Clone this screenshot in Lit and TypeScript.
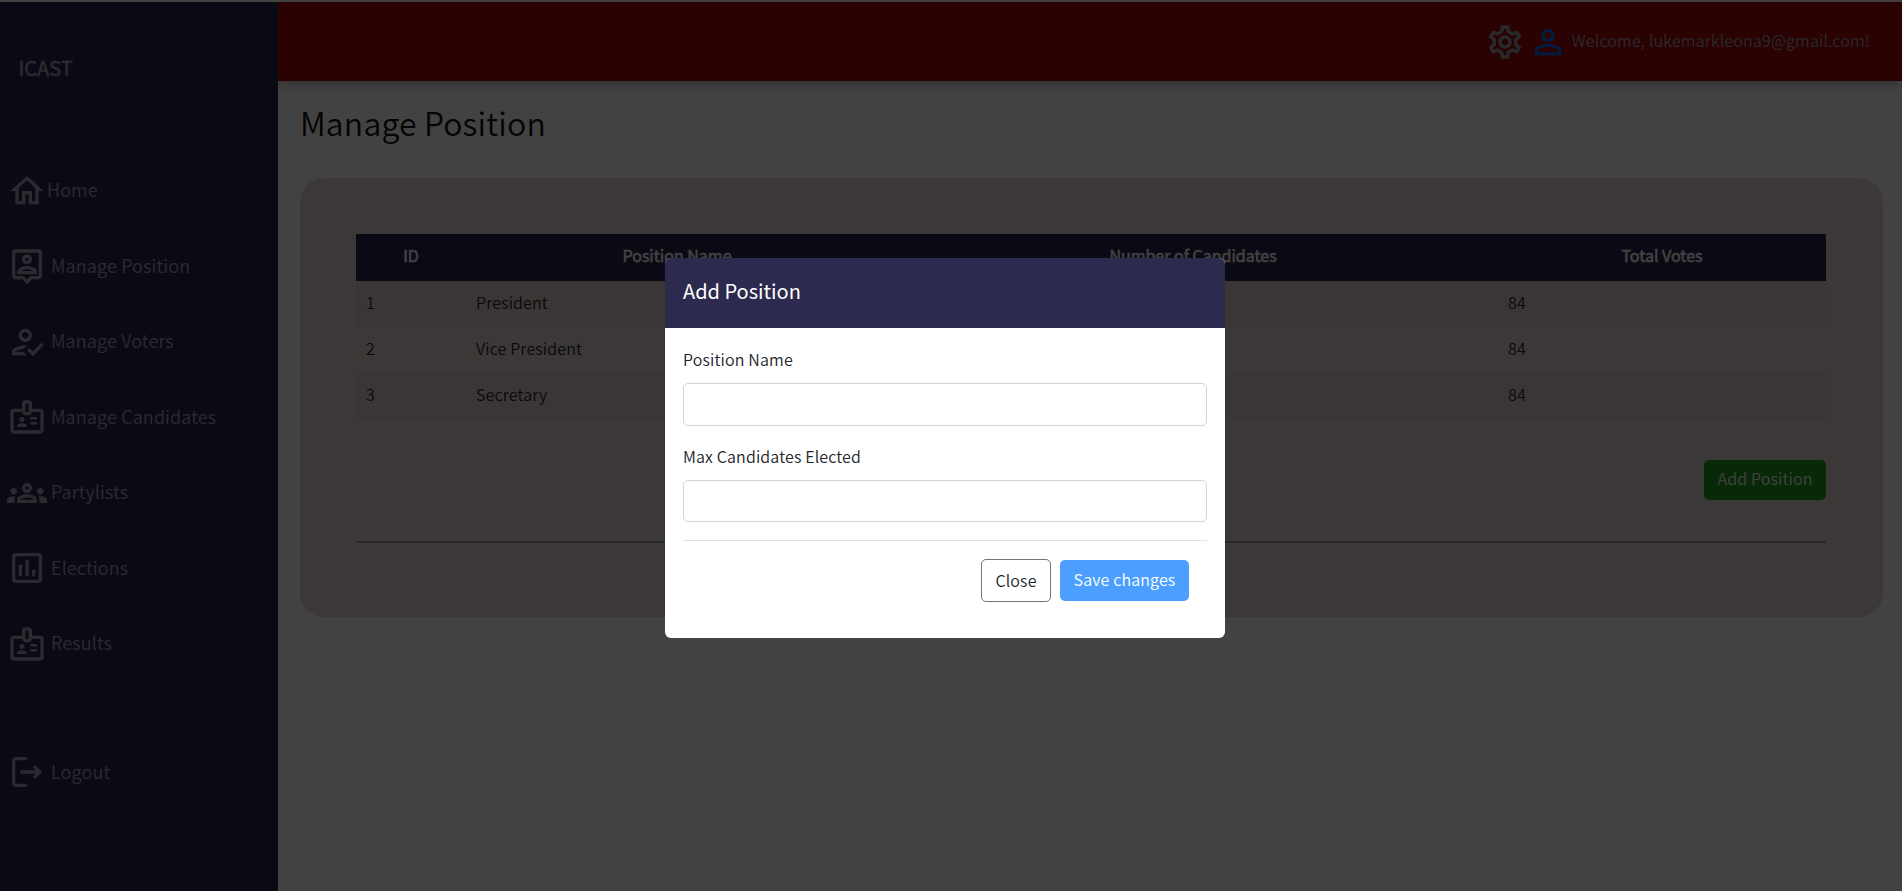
import { LitElement, css, html, svg } from "lit";
import { customElement } from "lit/decorators.js";

const ICONS = {
  home: svg`<path d="M12 5.69l5 4.5V18h-2v-6H9v6H7v-7.81l5-4.5M12 3L2 12h3v8h6v-6h2v6h6v-8h3L12 3z"/>`,
  position: svg`<path d="M19 2H5c-1.11 0-2 .9-2 2v14c0 1.1.89 2 2 2h4l3 3 3-3h4c1.1 0 2-.9 2-2V4c0-1.1-.9-2-2-2zm0 16h-4.83l-.59.59L12 20.17l-1.59-1.59-.58-.58H5V4h14v14zm-7-7c1.65 0 3-1.35 3-3s-1.35-3-3-3-3 1.35-3 3 1.35 3 3 3zm0-4c.55 0 1 .45 1 1s-.45 1-1 1-1-.45-1-1 .45-1 1-1zm6 8.58c0-2.5-3.97-3.58-6-3.58s-6 1.08-6 3.58V17h12v-1.42zM8.48 15c.74-.51 2.23-1 3.52-1s2.78.49 3.52 1H8.48z"/>`,
  voters: svg`<path d="M11 12c2.21 0 4-1.79 4-4s-1.79-4-4-4-4 1.79-4 4 1.79 4 4 4zm0-6c1.1 0 2 .9 2 2s-.9 2-2 2-2-.9-2-2 .9-2 2-2zM5 18c.2-.63 2.57-1.68 4.96-1.94l2.04-2c-.39-.04-.68-.06-1-.06-2.67 0-8 1.34-8 4v2h9l-2-2H5zm15.6-5.5l-5.13 5.17-2.07-2.08L12 17l3.47 3.5L22 13.91z"/>`,
  badge: svg`<path d="M20,7h-5V4c0-1.1-0.9-2-2-2h-2C9.9,2,9,2.9,9,4v3H4C2.9,7,2,7.9,2,9v11c0,1.1,0.9,2,2,2h16c1.1,0,2-0.9,2-2V9C22,7.9,21.1,7,20,7z M11,4h2v5h-2V4z M20,20H4V9h5c0,1.1,0.9,2,2,2h2c1.1,0,2-0.9,2-2h5V20z M9,15c0.83,0,1.5-0.67,1.5-1.5S9.83,12,9,12s-1.5,0.67-1.5,1.5S8.17,15,9,15z M11.08,16.18C10.44,15.9,9.74,15.75,9,15.75s-1.44,0.15-2.08,0.43C6.36,16.42,6,16.96,6,17.57V18h6v-0.43C12,16.96,11.64,16.42,11.08,16.18z M18,13.5h-4V12h4V13.5z M18,16.5h-4V15h4V16.5z"/>`,
  groups: svg`<path d="M4,13c1.1,0,2-0.9,2-2c0-1.1-0.9-2-2-2s-2,0.9-2,2C2,12.1,2.9,13,4,13z M5.13,14.1C4.76,14.04,4.39,14,4,14c-0.99,0-1.93,0.21-2.78,0.58C0.48,14.9,0,15.62,0,16.43V18l4.5,0v-1.61C4.5,15.56,4.73,14.78,5.13,14.1z M20,13c1.1,0,2-0.9,2-2c0-1.1-0.9-2-2-2s-2,0.9-2,2C18,12.1,18.9,13,20,13z M24,16.43c0-0.81-0.48-1.53-1.22-1.85C21.93,14.21,20.99,14,20,14c-0.39,0-0.76,0.04-1.13,0.1c0.4,0.68,0.63,1.46,0.63,2.29V18l4.5,0V16.43z M16.24,13.65c-1.17-0.52-2.61-0.9-4.24-0.9c-1.63,0-3.07,0.39-4.24,0.9C6.68,14.13,6,15.21,6,16.39V18h12v-1.61C18,15.21,17.32,14.13,16.24,13.65z M8.07,16c0.09-0.23,0.13-0.39,0.91-0.69c0.97-0.38,1.99-0.56,3.02-0.56s2.05,0.18,3.02,0.56c0.77,0.3,0.81,0.46,0.91,0.69H8.07z M12,8c0.55,0,1,0.45,1,1s-0.45,1-1,1s-1-0.45-1-1S11.45,8,12,8 M12,6c-1.66,0-3,1.34-3,3c0,1.66,1.34,3,3,3s3-1.34,3-3C15,7.34,13.66,6,12,6L12,6z"/>`,
  poll: svg`<path d="M9 17H7v-7h2v7zm4 0h-2V7h2v10zm4 0h-2v-4h2v4zm2 2H5V5h14v14zm0-16H5c-1.1 0-2 .9-2 2v14c0 1.1.9 2 2 2h14c1.1 0 2-.9 2-2V5c0-1.1-.9-2-2-2z"/>`,
  logout: svg`<path d="M17 8l-1.4 1.4L17.2 11H8v2h9.2l-1.6 1.6L17 16l4-4zM5 5h7V3H5c-1.1 0-2 .9-2 2v14c0 1.1.9 2 2 2h7v-2H5z"/>`,
  settings: svg`<path d="M19.43 12.98c.04-.32.07-.64.07-.98 0-.34-.03-.66-.07-.98l2.11-1.65c.19-.15.24-.42.12-.64l-2-3.46c-.09-.16-.26-.25-.44-.25-.06 0-.12.01-.17.03l-2.49 1c-.52-.4-1.08-.73-1.69-.98l-.38-2.65C14.46 2.18 14.25 2 14 2h-4c-.25 0-.46.18-.49.42l-.38 2.65c-.61.25-1.17.59-1.69.98l-2.49-1c-.06-.02-.12-.03-.18-.03-.17 0-.34.09-.43.25l-2 3.46c-.13.22-.07.49.12.64l2.11 1.65c-.04.32-.07.65-.07.98 0 .33.03.66.07.98l-2.11 1.65c-.19.15-.24.42-.12.64l2 3.46c.09.16.26.25.44.25.06 0 .12-.01.17-.03l2.49-1c.52.4 1.08.73 1.69.98l.38 2.65c.03.24.24.42.49.42h4c.25 0 .46-.18.49-.42l.38-2.65c.61-.25 1.17-.59 1.69-.98l2.49 1c.06.02.12.03.18.03.17 0 .34-.09.43-.25l2-3.46c.12-.22.07-.49-.12-.64l-2.11-1.65zm-1.98-1.71c.04.31.05.52.05.73 0 .21-.02.43-.05.73l-.14 1.13.89.7 1.08.84-.7 1.21-1.27-.51-1.04-.42-.9.68c-.43.32-.84.56-1.25.73l-1.06.43-.16 1.13-.2 1.35h-1.4l-.19-1.35-.16-1.13-1.06-.43c-.43-.18-.83-.41-1.23-.71l-.91-.7-1.06.43-1.27.51-.7-1.21 1.08-.84.89-.7-.14-1.13c-.03-.31-.05-.54-.05-.74s.02-.43.05-.73l.14-1.13-.89-.7-1.08-.84.7-1.21 1.27.51 1.04.42.9-.68c.43-.32.84-.56 1.25-.73l1.06-.43.16-1.13.2-1.35h1.39l.19 1.35.16 1.13 1.06.43c.43.18.83.41 1.23.71l.91.7 1.06-.43 1.27-.51.7 1.21-1.07.85-.89.7.14 1.13zM12 8c-2.21 0-4 1.79-4 4s1.79 4 4 4 4-1.79 4-4-1.79-4-4-4zm0 6c-1.1 0-2-.9-2-2s.9-2 2-2 2 .9 2 2-.9 2-2 2z"/>`,
  person: svg`<path d="M12 5.9c1.16 0 2.1.94 2.1 2.1s-.94 2.1-2.1 2.1S9.9 9.16 9.9 8s.94-2.1 2.1-2.1m0 9c2.97 0 6.1 1.46 6.1 2.1v1.1H5.9V17c0-.64 3.13-2.1 6.1-2.1M12 4C9.79 4 8 5.79 8 8s1.79 4 4 4 4-1.79 4-4-1.79-4-4-4zm0 9c-2.67 0-8 1.34-8 4v3h16v-3c0-2.66-5.33-4-8-4z"/>`,
};

type IconName = keyof typeof ICONS;

const NAV: { label: string; icon: IconName }[] = [
  { label: "Home", icon: "home" },
  { label: "Manage Position", icon: "position" },
  { label: "Manage Voters", icon: "voters" },
  { label: "Manage Candidates", icon: "badge" },
  { label: "Partylists", icon: "groups" },
  { label: "Elections", icon: "poll" },
  { label: "Results", icon: "badge" },
];

const POSITIONS = [
  { id: 1, name: "President", votes: 84 },
  { id: 2, name: "Vice President", votes: 84 },
  { id: 3, name: "Secretary", votes: 84 },
];

const icon = (name: IconName) =>
  html`<svg class="icon" viewBox="0 0 24 24" fill="currentColor">${ICONS[name]}</svg>`;

@customElement("app-root")
export class AppRoot extends LitElement {
  static styles = css`
    :host {
      display: block;
      height: 891px;
      overflow: hidden;
      position: relative;
      background: #fff;
      font-family: "Noto Sans CJK SC", "Noto Sans", sans-serif;
      font-size: 16px;
      font-weight: 350;
      letter-spacing: 0.009em;
      line-height: 24px;
      color: #212529;
    }

    .page {
      display: flex;
      height: 891px;
      padding-top: 2px;
      box-sizing: border-box;
    }

    .sidebar {
      width: 278px;
      flex: none;
      background: #2c2a4e;
      color: #a0a6b0;
    }

    .brand {
      height: 151px;
      padding: 50px 0 0 18.5px;
      box-sizing: border-box;
      font-size: 20px;
      line-height: 32px;
      font-weight: 400;
      letter-spacing: 0;
      -webkit-text-stroke: 0.5px currentColor;
    }

    .nav-item {
      display: flex;
      align-items: center;
      gap: 4px;
      height: 75.5px;
      padding-left: 7px;
      font-size: 18px;
    }

    .nav-item span {
      margin-top: -3px;
    }

    .nav-item.home {
      gap: 0;
    }

    .nav-item.home span {
      margin-top: -4px;
    }

    .nav-item.logout {
      margin-top: 53px;
    }

    .nav-item.logout span {
      margin-top: -2px;
    }

    .icon {
      width: 40px;
      height: 40px;
      flex: none;
      display: block;
    }

    .content {
      flex: 1;
      min-width: 0;
    }

    .topbar {
      height: 79px;
      background: #a50b0b;
      box-shadow: 0 4px 10px rgba(0, 0, 0, 0.25);
      display: flex;
      align-items: center;
      justify-content: flex-end;
      gap: 3.5px;
      padding-right: 32px;
      color: #9aa0a8;
    }

    .topbar .user {
      color: #0d6efd;
    }

    .topbar .welcome {
      margin-top: -4px;
    }

    .title {
      margin: 19px 0 0 22px;
      font-size: 32px;
      line-height: 44px;
      font-weight: 350;
      color: #111;
    }

    .card {
      margin: 34px 19px 0 22px;
      height: 439px;
      box-sizing: border-box;
      padding: 56px 57px 0 56px;
      background: #e8d8d3;
      border-radius: 24px;
    }

    table {
      width: 100%;
      border-collapse: collapse;
      table-layout: fixed;
    }

    th {
      height: 47px;
      padding: 0 0 6px;
      background: #2c2a4e;
      color: #fff;
      font-weight: 400;
      letter-spacing: 0;
      -webkit-text-stroke: 0.5px currentColor;
      text-align: center;
      box-sizing: border-box;
    }

    td {
      height: 46px;
      padding: 0 10px 4px;
      box-sizing: border-box;
    }

    tbody tr:nth-child(odd) td {
      background: rgba(0, 0, 0, 0.03);
    }

    .actions {
      display: flex;
      justify-content: flex-end;
      margin-top: 41px;
    }

    .add {
      width: 122px;
      height: 40px;
      padding: 0 0 5px;
      border: none;
      border-radius: 5px;
      background: #1f9f1f;
      color: #fff;
      font: inherit;
      letter-spacing: inherit;
    }

    .rule {
      height: 2px;
      margin-top: 41px;
      background: #999;
    }

    .backdrop {
      position: fixed;
      inset: 0;
      box-sizing: border-box;
      padding-right: 12px;
      background: rgba(0, 0, 0, 0.74);
      display: flex;
      justify-content: center;
      align-items: flex-start;
    }

    .modal {
      width: 560px;
      height: 380px;
      margin-top: 258px;
      background: #fff;
      border-radius: 6px;
      overflow: hidden;
    }

    .modal-head {
      height: 70px;
      display: flex;
      align-items: center;
      padding: 0 0 5px 18px;
      box-sizing: border-box;
      background: #2c2a4e;
      color: #fff;
      font-size: 20px;
      font-weight: 400;
      letter-spacing: 0;
    }

    .modal-body {
      padding: 19px 18px 0;
    }

    label {
      display: block;
      margin-bottom: 12px;
    }

    label.second {
      margin-top: -1px;
    }

    input {
      display: block;
      width: 100%;
      height: 43px;
      box-sizing: border-box;
      border: 1px solid #ced4da;
      border-radius: 5px;
      margin-bottom: 19px;
      background: #fff;
    }

    input.second {
      height: 42px;
    }

    .modal-rule {
      height: 1px;
      background: #dee2e6;
      margin-top: -1px;
    }

    .modal-foot {
      display: flex;
      justify-content: flex-end;
      align-items: center;
      gap: 9px;
      margin-top: 18px;
      padding-right: 18px;
    }

    .modal-foot button {
      border-radius: 5px;
      font: inherit;
      letter-spacing: inherit;
    }

    .close {
      width: 70px;
      height: 43px;
      padding: 0 0 2px;
      background: #fff;
      color: #212529;
      border: 1px solid #6c757d;
    }

    .save {
      width: 129px;
      height: 41px;
      padding: 0 0 3px;
      background: #4d9fff;
      color: #fff;
      border: none;
    }
  `;

  render() {
    return html`
      <div class="page">
        <aside class="sidebar">
          <div class="brand">ICAST</div>
          ${NAV.map(
            (item) => html`
              <div class="nav-item ${item.icon === "home" ? "home" : ""}">
                ${icon(item.icon)}<span>${item.label}</span>
              </div>
            `
          )}
          <div class="nav-item logout">${icon("logout")}<span>Logout</span></div>
        </aside>
        <div class="content">
          <header class="topbar">
            ${icon("settings")}
            <span class="user">${icon("person")}</span>
            <span class="welcome">Welcome, lukemarkleona9@gmail.com!</span>
          </header>
          <h1 class="title">Manage Position</h1>
          <section class="card">
            <table>
              <colgroup>
                <col style="width: 110px" />
                <col style="width: 422px" />
                <col style="width: 610px" />
                <col style="width: 328px" />
              </colgroup>
              <thead>
                <tr>
                  <th>ID</th>
                  <th>Position Name</th>
                  <th>Number of Candidates</th>
                  <th>Total Votes</th>
                </tr>
              </thead>
              <tbody>
                ${POSITIONS.map(
                  (p) => html`
                    <tr>
                      <td>${p.id}</td>
                      <td>${p.name}</td>
                      <td></td>
                      <td>${p.votes}</td>
                    </tr>
                  `
                )}
              </tbody>
            </table>
            <div class="actions"><button class="add">Add Position</button></div>
            <div class="rule"></div>
          </section>
        </div>
      </div>
      <div class="backdrop">
        <div class="modal">
          <div class="modal-head">Add Position</div>
          <div class="modal-body">
            <label>Position Name</label>
            <input type="text" />
            <label class="second">Max Candidates Elected</label>
            <input class="second" type="text" />
            <div class="modal-rule"></div>
            <div class="modal-foot">
              <button class="close">Close</button>
              <button class="save">Save changes</button>
            </div>
          </div>
        </div>
      </div>
    `;
  }
}
